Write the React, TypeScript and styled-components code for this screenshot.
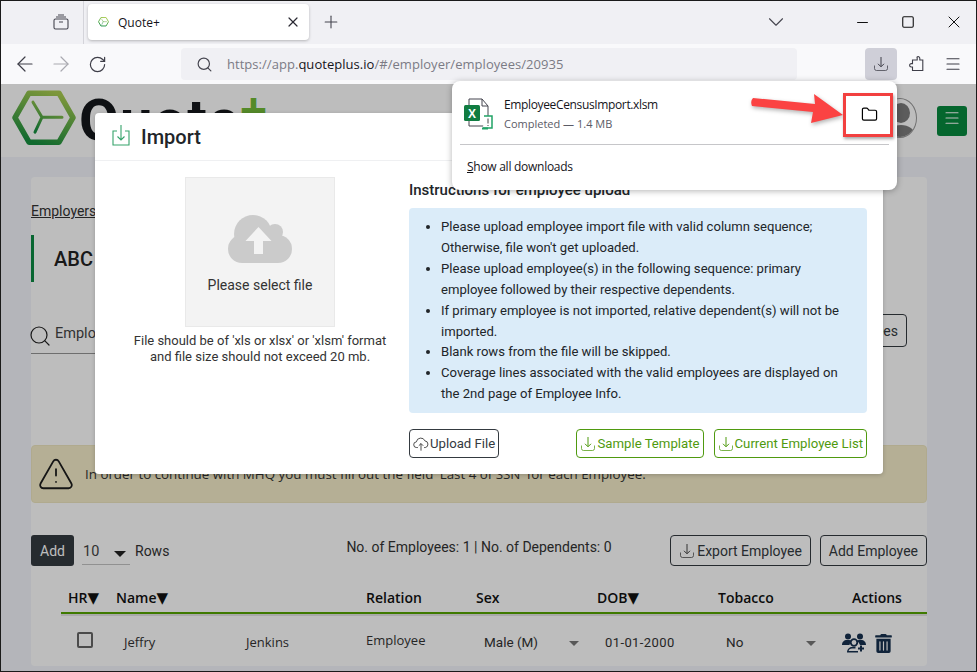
import styled, { createGlobalStyle } from "styled-components";
import {
  ArrowLeft,
  ArrowRight,
  ChevronDown,
  Folder,
  Menu,
  Minus,
  Plus,
  RotateCw,
  Search,
  Square,
  TriangleAlert,
  X,
} from "lucide-react";
import { FaTrashAlt } from "react-icons/fa";

const Global = createGlobalStyle`
  html, body {
    margin: 0;
    padding: 0;
    background: #fff;
  }
  * {
    box-sizing: border-box;
  }
  svg {
    flex: none;
  }
`;

const TrayIcon = ({ size = 16, color = "currentColor" }: { size?: number; color?: string }) => (
  <svg width={size} height={size} viewBox="0 0 16 16" fill="none" stroke={color} strokeWidth="1">
    <path d="M8 1v9.500M5 7.800l3 3 3-3" />
    <path d="M1.500 9.500v3a2 2 0 0 0 2 2h9a2 2 0 0 0 2-2v-3" opacity="0.75" />
  </svg>
);

const PuzzleIcon = () => (
  <svg width="16" height="16" viewBox="0 0 16 16" fill="none" stroke="#3e3e48" strokeWidth="1.100">
    <path d="M8 1.200a1.600 1.600 0 0 1 2.800 1V4h3v10.500H3.500V11H2.300a1.700 1.700 0 0 1 0-3.400h1.200V4h4.700V2.500z" />
  </svg>
);

const CloudOutline = () => (
  <svg width="16" height="16" viewBox="0 0 18 18" fill="none" stroke="#3a3a3a" strokeWidth="1">
    <path d="M5.500 13H4.200a3.200 3.200 0 0 1-.4-6.400A5 5 0 0 1 13.400 5.500a3.800 3.800 0 0 1 .4 7.500h-1.300" />
    <path d="M9 16.500V8.500M6.500 11 9 8.500l2.500 2.500" />
  </svg>
);

const HexLogo = ({ size }: { size: number }) => (
  <svg width={size} height={size * 0.88} viewBox="0 0 64 56" fill="none">
    <defs>
      <linearGradient id="hexGrad" x1="0.7" y1="0" x2="0.3" y2="1">
        <stop offset="0" stopColor="#a9cc50" />
        <stop offset="1" stopColor="#178f40" />
      </linearGradient>
    </defs>
    <path d="M17 3h30l14 24.500-14 24.500H17L3 27.500z" stroke="url(#hexGrad)" strokeWidth="5.500" strokeLinejoin="round" />
    <path d="M21 12 30 27H50M30 27 23 42" stroke="url(#hexGrad)" strokeWidth="3" strokeLinecap="round" strokeLinejoin="round" />
  </svg>
);

const ExcelFileIcon = () => (
  <svg width="32" height="32" viewBox="0 0 32 32" fill="none">
    <path d="M5 1h13l6 7v20H5z" stroke="#45454f" strokeWidth="1" fill="#fff" />
    <path d="M18 1v7h6" stroke="#45454f" strokeWidth="1" />
    <rect x="0" y="7" width="16" height="16" rx="1.500" fill="#107c41" />
    <text x="8" y="19.500" textAnchor="middle" fontFamily="Liberation Sans" fontWeight="700" fontSize="12" fill="#fff">
      X
    </text>
    <path d="M20 18h8v12h-9" stroke="#21a366" strokeWidth="1.500" fill="#fff" />
    <path d="M18 30.500h6" stroke="#21a366" strokeWidth="2" />
    <path d="M24 20.500v5M24 27v1" stroke="#444" strokeWidth="1" />
  </svg>
);

const GroupAddIcon = () => (
  <svg width="24" height="20" viewBox="0 0 24 20" fill="#16304f">
    <circle cx="6" cy="3.500" r="3" />
    <circle cx="18" cy="3.500" r="3" />
    <path d="M0 12c0-3 2-5 5-5h2c1 0 2 .4 2.600 1A6 6 0 0 0 7.500 12z" />
    <path d="M14.500 8c.6-.6 1.600-1 2.500-1H19c3 0 5 2 5 5h-6a6 6 0 0 0-3.500-4z" />
    <circle cx="12" cy="9.500" r="3.300" fill="none" stroke="#16304f" strokeWidth="1.800" />
    <path d="M5 19.500c0-3 2-5.500 5-5.500h3.500v1.500H10c-2 0-3.200 1.300-3.300 2.500H16v1.500z" />
    <path d="M19 12.500v6M16 15.500h6" stroke="#16304f" strokeWidth="2" />
  </svg>
);

const UploadCloud = () => (
  <svg width="64" height="48" viewBox="0 0 64 48">
    <circle cx="25" cy="19" r="19" fill="#cbcbcb" />
    <circle cx="47" cy="17" r="8" fill="#cbcbcb" />
    <rect x="0" y="20" width="64" height="28" rx="14" fill="#cbcbcb" />
    <path d="M30.500 12 43.500 26H35V39H26V26H17.500z" fill="#f3f3f3" />
  </svg>
);

const instructions = [
  "Please upload employee import file with valid column sequence; Otherwise, file won't get uploaded.",
  "Please upload employee(s) in the following sequence: primary employee followed by their respective dependents.",
  "If primary employee is not imported, relative dependent(s) will not be imported.",
  "Blank rows from the file will be skipped.",
  "Coverage lines associated with the valid employees are displayed on the 2nd page of Employee Info.",
];

export default function App() {
  return (
    <>
      <Global />
      <BrowserWindow>
        <TabStrip>
          <TabViewButton>
            <svg width="16" height="16" viewBox="0 0 16 16" fill="none" stroke="#45454f" strokeWidth="1.100">
              <rect x="1" y="5" width="14" height="10" rx="1.500" />
              <path d="M3 3h10M5 1h6M6 8h4" />
            </svg>
          </TabViewButton>
          <Tab>
            <HexLogo size={11} />
            <TabTitle>Quote+</TabTitle>
            <X size={16} color="#2b2a33" absoluteStrokeWidth strokeWidth={1.200} />
          </Tab>
          <NewTab>
            <Plus size={20} color="#45454f" absoluteStrokeWidth strokeWidth={1.100} />
          </NewTab>
          <ListTabs>
            <ChevronDown size={26} color="#45454f" absoluteStrokeWidth strokeWidth={1.100} />
          </ListTabs>
          <WindowControls>
            <Minus size={17} color="#111" absoluteStrokeWidth strokeWidth={1} />
            <Square size={14} color="#111" absoluteStrokeWidth strokeWidth={1.100} />
            <X size={20} color="#111" absoluteStrokeWidth strokeWidth={1} />
          </WindowControls>
        </TabStrip>

        <NavBar>
          <NavButtons>
            <ArrowLeft size={24} color="#3e3e48" absoluteStrokeWidth strokeWidth={1.200} />
            <ArrowRight size={24} color="#a9a9b0" absoluteStrokeWidth strokeWidth={1.200} />
            <RotateCw size={19} color="#3e3e48" absoluteStrokeWidth strokeWidth={1.200} />
          </NavButtons>
          <UrlBar>
            <Search size={17} color="#45454f" absoluteStrokeWidth strokeWidth={1.200} />
            <UrlText>
              https://app.<b>quoteplus.io</b>/#/employer/employees/20935
            </UrlText>
          </UrlBar>
          <DownloadsButton>
            <TrayIcon size={16} color="#3e3e48" />
          </DownloadsButton>
          <ToolButton>
            <PuzzleIcon />
          </ToolButton>
          <ToolButton>
            <Menu size={18} color="#3e3e48" absoluteStrokeWidth strokeWidth={1.100} />
          </ToolButton>
        </NavBar>

        <Page>
          <SiteHeader>
            <HexLogo size={64} />
            <Brand>
              Quote<BrandPlus>+</BrandPlus>
            </Brand>
            <Avatar>
              <AvatarHead />
              <AvatarBody />
            </Avatar>
            <SiteMenu>
              <Menu size={18} color="#fff" absoluteStrokeWidth strokeWidth={1.100} />
            </SiteMenu>
          </SiteHeader>

          <Card>
            <Breadcrumb>
              <u>Employers</u> / ABC
            </Breadcrumb>
            <TitleBar>ABC</TitleBar>
            <SearchRow>
              <SearchField>
                <Search size={24} color="#222" absoluteStrokeWidth strokeWidth={1.200} />
                Employee
              </SearchField>
              <OutlineButton $tall>Import Employees</OutlineButton>
            </SearchRow>
            <Alert>
              <TriangleAlert size={38} color="#1d1d1d" absoluteStrokeWidth strokeWidth={1.800} />
              In order to continue with MHQ you must fill out the field 'Last 4 of SSN' for each Employee.
            </Alert>
            <Toolbar>
              <RowsControl>
                <AddButton>Add</AddButton>
                <RowsSelect>
                  10
                  <Caret />
                </RowsSelect>
                Rows
              </RowsControl>
              <Counts>No. of Employees: 1 | No. of Dependents: 0</Counts>
              <ToolbarActions>
                <OutlineButton>
                  <TrayIcon size={16} color="#444" />
                  Export Employee
                </OutlineButton>
                <OutlineButton>Add Employee</OutlineButton>
              </ToolbarActions>
            </Toolbar>
            <TableHead>
              <HeadCell $pad={7}>
                HR<SortMark>▼</SortMark>
              </HeadCell>
              <HeadCell $span={2}>
                Name<SortMark>▼</SortMark>
              </HeadCell>
              <HeadCell>Relation</HeadCell>
              <HeadCell>Sex</HeadCell>
              <HeadCell>
                DOB<SortMark>▼</SortMark>
              </HeadCell>
              <HeadCell>Tobacco</HeadCell>
              <HeadCell>Actions</HeadCell>
            </TableHead>
            <TableRow>
              <RowCell $pad={16} $lift>
                <CheckBox />
              </RowCell>
              <RowCell $pad={8}>Jeffry</RowCell>
              <RowCell $pad={8}>Jenkins</RowCell>
              <RowCell $lift>Employee</RowCell>
              <SelectCell $right={18}>
                Male (M)
                <Caret $muted />
              </SelectCell>
              <RowCell $pad={8} $roboto>
                01-01-2000
              </RowCell>
              <SelectCell $right={36}>
                No
                <Caret $muted />
              </SelectCell>
              <ActionCell>
                <GroupAddIcon />
                <FaTrashAlt size={19} color="#16304f" />
              </ActionCell>
            </TableRow>
          </Card>

          <Backdrop>
            <Modal>
              <ModalHeader>
                <svg width="20" height="24" viewBox="0 0 20 24" fill="none" stroke="#35a36b" strokeWidth="1.100">
                  <path d="M6 6H2v14h16V6h-4" />
                  <path d="M10 0v15M6.500 11.500 10 15l3.500-3.500" />
                </svg>
                Import
              </ModalHeader>
              <ModalBody>
                <UploadColumn>
                  <DropZone>
                    <UploadCloud />
                    Please select file
                  </DropZone>
                  <UploadHint>
                    File should be of 'xls or xlsx' or 'xlsm' format
                    <br />
                    and file size should not exceed 20 mb.
                  </UploadHint>
                </UploadColumn>
                <InfoColumn>
                  <InfoTitle>Instructions for employee upload</InfoTitle>
                  <InfoBox>
                    {instructions.map((line) => (
                      <li key={line}>{line}</li>
                    ))}
                  </InfoBox>
                  <ModalActions>
                    <ModalButton>
                      <CloudOutline />
                      Upload File
                    </ModalButton>
                    <ModalButton $green>
                      <TrayIcon size={16} color="#4f9a0f" />
                      Sample Template
                    </ModalButton>
                    <ModalButton $green>
                      <TrayIcon size={16} color="#4f9a0f" />
                      Current Employee List
                    </ModalButton>
                  </ModalActions>
                </InfoColumn>
              </ModalBody>
            </Modal>
          </Backdrop>
        </Page>

        <DownloadsPanel>
          <DownloadItem>
            <ExcelFileIcon />
            <DownloadText>
              <FileName>EmployeeCensusImport.xlsm</FileName>
              <FileStatus>Completed — 1.4 MB</FileStatus>
            </DownloadText>
            <Folder size={17} color="#000" absoluteStrokeWidth strokeWidth={1.200} />
          </DownloadItem>
          <ShowAll>
            <u>S</u>how all downloads
          </ShowAll>
        </DownloadsPanel>

        <Callout>
          <svg width="92" height="32" viewBox="0 0 92 32">
            <path d="M2 5 64 11 63 1 92 22 60 30 62 19 1 13Q-1 8 2 5z" fill="#fb4343" />
          </svg>
        </Callout>
        <CalloutBox />
      </BrowserWindow>
    </>
  );
}

const BrowserWindow = styled.div`
  position: relative;
  width: 977px;
  height: 672px;
  overflow: hidden;
  display: flex;
  flex-direction: column;
  font-family: "Roboto", sans-serif;
  background: #f3f5fb;

  &::after {
    content: "";
    position: absolute;
    inset: 0;
    border: 1px solid #1a1a1a;
    pointer-events: none;
    z-index: 60;
  }
`;

const TabStrip = styled.div`
  height: 44px;
  flex: none;
  display: flex;
  align-items: center;
  background: #f0f0f4;
  font-family: "Open Sans", sans-serif;
`;

const TabViewButton = styled.div`
  width: 84px;
  height: 44px;
  padding-left: 53px;
  display: flex;
  align-items: center;
  border-right: 1px solid #d4d4da;
`;

const Tab = styled.div`
  width: 221px;
  height: 36px;
  margin-left: 4px;
  padding: 0 8px 0 10px;
  display: flex;
  align-items: center;
  background: #fff;
  border-radius: 4px;
  box-shadow: 0 1px 3px rgba(0, 0, 0, 0.25);
`;

const TabTitle = styled.span`
  flex: 1;
  margin-left: 9px;
  font-size: 12px;
  color: #15141a;
`;

const NewTab = styled.div`
  width: 16px;
  margin-left: 14px;
  display: flex;
  justify-content: center;
`;

const ListTabs = styled.div`
  width: 16px;
  margin-left: 429px;
  display: flex;
  justify-content: center;
`;

const WindowControls = styled.div`
  margin-left: 55px;
  display: grid;
  grid-template-columns: repeat(3, 46px);
  justify-items: center;
  align-items: center;
`;

const NavBar = styled.div`
  height: 40px;
  flex: none;
  display: flex;
  align-items: center;
  background: #f9f9fb;
`;

const NavButtons = styled.div`
  width: 181px;
  padding-left: 7px;
  display: grid;
  grid-template-columns: repeat(3, 36px);
  justify-items: center;
  align-items: center;
`;

const UrlBar = styled.div`
  width: 616px;
  height: 32px;
  padding-left: 15px;
  display: flex;
  align-items: center;
  gap: 14px;
  background: #f0f0f4;
  border-radius: 4px;
`;

const UrlText = styled.span`
  font-family: "Open Sans", sans-serif;
  font-size: 13px;
  letter-spacing: 0.04px;
  color: #7b7b85;

  b {
    font-weight: 400;
    color: #15141a;
  }
`;

const DownloadsButton = styled.div`
  width: 32px;
  height: 32px;
  margin: 0 2px 0 68px;
  display: flex;
  align-items: center;
  justify-content: center;
  background: #cfcfd8;
  border-radius: 4px;
`;

const ToolButton = styled.div`
  width: 36px;
  height: 32px;
  display: flex;
  align-items: center;
  justify-content: center;
`;

const Page = styled.div`
  position: relative;
  flex: 1;
  overflow: hidden;
`;

const SiteHeader = styled.div`
  height: 73px;
  padding: 6px 10px 0 12px;
  display: flex;
  align-items: flex-start;
  background: #fff;
`;

const Brand = styled.div`
  margin-left: 3px;
  font-size: 58px;
  line-height: 60px;
  font-weight: 700;
  letter-spacing: 1px;
  white-space: nowrap;
  color: #15181c;
`;

const BrandPlus = styled.span`
  display: inline-block;
  font-size: 48px;
  line-height: 40px;
  font-weight: 500;
  vertical-align: 13px;
  color: #72bb38;
`;

const Avatar = styled.div`
  position: relative;
  width: 34px;
  height: 40px;
  margin: 8px 20px 0 auto;
  overflow: hidden;
  border-radius: 50%;
  border: 1px solid #9a9a9a;
`;

const AvatarHead = styled.div`
  position: absolute;
  top: 4px;
  left: 8px;
  width: 18px;
  height: 20px;
  border-radius: 50%;
  background: #7d7d7d;
`;

const AvatarBody = styled.div`
  position: absolute;
  top: 26px;
  left: 3px;
  width: 28px;
  height: 20px;
  border-radius: 50%;
  background: #7d7d7d;
`;

const SiteMenu = styled.div`
  width: 30px;
  height: 30px;
  margin-top: 16px;
  padding-top: 3px;
  display: flex;
  align-items: flex-start;
  justify-content: center;
  background: #078a3f;
  border-radius: 3px;
`;

const Card = styled.div`
  width: 896px;
  margin: 20px 0 0 31px;
  padding: 26px 20px 0 0;
  background: #fff;
  border-radius: 4px;
`;

const Breadcrumb = styled.div`
  font-size: 14px;
  line-height: 17px;
  color: #333;
`;

const TitleBar = styled.div`
  height: 47px;
  margin-top: 15px;
  padding-left: 20px;
  display: flex;
  align-items: center;
  border-left: 3px solid #0b8a43;
  font-size: 20px;
  font-weight: 500;
  color: #222;
`;

const SearchRow = styled.div`
  margin-top: 32px;
  display: flex;
  justify-content: space-between;
  align-items: flex-start;
`;

const SearchField = styled.div`
  width: 400px;
  height: 40px;
  display: flex;
  align-items: center;
  gap: 3px;
  border-bottom: 1px solid #959595;
  font-size: 14.500px;
  color: #444;

  svg {
    margin: 5px 0 0 -3px;
  }
`;

const OutlineButton = styled.div<{ $tall?: boolean }>`
  height: ${({ $tall }) => ($tall ? 33 : 31)}px;
  padding: 0 8px;
  display: flex;
  align-items: center;
  gap: 2px;
  border: 1px solid #343a40;
  border-radius: 4px;
  font-size: 14px;
  color: #343a40;
  white-space: nowrap;
`;

const Alert = styled.div`
  height: 58px;
  width: 896px;
  margin-top: 91px;
  padding-left: 5px;
  display: flex;
  align-items: center;
  gap: 10px;
  background: #f4edca;
  border: 1px solid #eee6c0;
  border-radius: 4px;
  font-family: "Open Sans", sans-serif;
  font-size: 13.350px;
  color: #333;
`;

const Toolbar = styled.div`
  width: 896px;
  margin-top: 32px;
  display: grid;
  grid-template-columns: 1fr auto 1fr;
`;

const RowsControl = styled.div`
  display: flex;
  align-items: center;
  font-size: 14px;
  color: #333;
`;

const AddButton = styled.div`
  width: 43px;
  height: 31px;
  display: flex;
  align-items: center;
  justify-content: center;
  background: #343a40;
  border-radius: 3px;
  color: #fff;
`;

const RowsSelect = styled.div`
  width: 48px;
  height: 29px;
  margin: 0 5px 0 8px;
  padding: 7px 0 0 1px;
  display: flex;
  justify-content: space-between;
  border-bottom: 1px solid #c4c4c4;
  font-size: 14.500px;
  color: #444;
`;

const Caret = styled.span<{ $muted?: boolean }>`
  width: 0;
  height: 0;
  margin: 8px 4px 0 0;
  border-left: 6px solid transparent;
  border-right: 6px solid transparent;
  border-top: 6px solid ${({ $muted }) => ($muted ? "#777" : "#222")};
`;

const Counts = styled.div`
  padding-top: 4px;
  font-size: 14px;
  color: #333;
`;

const ToolbarActions = styled.div`
  display: flex;
  justify-content: flex-end;
  gap: 9px;
`;

const tableColumns = "55px 122px 128px 110px 121px 121px 134px 75px";

const TableHead = styled.div`
  width: 866px;
  height: 29px;
  margin: 19px 0 0 30px;
  padding-bottom: 5px;
  display: grid;
  grid-template-columns: ${tableColumns};
  align-items: end;
  border-bottom: 2px solid #55a500;
  font-family: "Open Sans", sans-serif;
  box-shadow: 0 2px 0 #e4e4e4;
`;

const HeadCell = styled.div<{ $pad?: number; $span?: number }>`
  grid-column: span ${({ $span }) => $span ?? 1};
  padding-left: ${({ $pad }) => $pad ?? 0}px;
  font-size: 14px;
  line-height: 19px;
  font-weight: 600;
  white-space: nowrap;
  color: #111;
`;

const SortMark = styled.span`
  font-family: "DejaVu Sans", sans-serif;
  font-size: 15px;
  line-height: 14px;
`;

const TableRow = styled.div`
  width: 866px;
  height: 52px;
  margin-left: 30px;
  padding-top: 4px;
  display: grid;
  grid-template-columns: ${tableColumns};
  align-items: center;
  font-family: "Open Sans", sans-serif;
  font-size: 13px;
  color: #333;
`;

const RowCell = styled.div<{ $pad?: number; $roboto?: boolean; $lift?: boolean }>`
  margin-top: ${({ $lift }) => ($lift ? -4 : 0)}px;
  padding-left: ${({ $pad }) => $pad ?? 0}px;
  font-family: ${({ $roboto }) => ($roboto ? '"Roboto", sans-serif' : "inherit")};
  letter-spacing: ${({ $roboto }) => ($roboto ? "0.4px" : "0")};
`;

const SelectCell = styled.div<{ $right: number }>`
  padding: 0 ${({ $right }) => $right}px 0 8px;
  display: flex;
  align-items: center;
  justify-content: space-between;
  font-family: "Roboto", sans-serif;
  font-size: 13.500px;

  ${Caret} {
    margin: 2px 0 0 0;
    border-left-width: 5px;
    border-right-width: 5px;
    border-top-width: 5px;
  }
`;

const ActionCell = styled.div`
  margin: 2px 0 0 -10px;
  display: flex;
  align-items: center;
  gap: 8px;
`;

const CheckBox = styled.div`
  width: 16px;
  height: 16px;
  border: 2px solid #666;
  border-radius: 2px;
`;

const Backdrop = styled.div`
  position: absolute;
  inset: 0;
  padding: 29px 0 0 95px;
  background: rgba(0, 0, 0, 0.26);
`;

const Modal = styled.div`
  width: 788px;
  height: 361px;
  background: #fff;
  border-radius: 4px;
  box-shadow: 0 1px 4px rgba(0, 0, 0, 0.2);
`;

const ModalHeader = styled.div`
  height: 48px;
  padding-left: 16px;
  display: flex;
  align-items: center;
  gap: 10px;
  border-bottom: 1px solid #eff0f2;
  font-size: 20px;
  font-weight: 500;
  color: #212529;
`;

const ModalBody = styled.div`
  display: flex;
  padding: 16px 16px 0 0;
`;

const UploadColumn = styled.div`
  width: 314px;
  padding-left: 16px;
  display: flex;
  flex-direction: column;
  align-items: center;
`;

const DropZone = styled.div`
  width: 150px;
  height: 150px;
  padding-top: 37px;
  display: flex;
  flex-direction: column;
  align-items: center;
  gap: 14px;
  background: #f3f3f3;
  border: 1px solid #e9e9e9;
  font-size: 14px;
  color: #333;
`;

const UploadHint = styled.div`
  margin-top: 6px;
  font-size: 13px;
  line-height: 16px;
  text-align: center;
  white-space: nowrap;
  color: #333;
`;

const InfoColumn = styled.div`
  width: 458px;
`;

const InfoTitle = styled.div`
  margin-top: 1px;
  font-size: 15px;
  font-weight: 500;
  line-height: 24px;
  color: #212529;
`;

const InfoBox = styled.ul`
  height: 205px;
  margin: 6px 0 0;
  padding: 9px 12px 0 32px;
  background: #dbecf9;
  border-radius: 4px;
  font-size: 13.100px;
  line-height: 20.900px;
  color: #212529;
`;

const ModalActions = styled.div`
  margin-top: 16px;
  display: flex;
  gap: 10px;

  & > :first-child {
    margin-right: auto;
  }
`;

const ModalButton = styled.div<{ $green?: boolean }>`
  height: 29px;
  padding: 0 3px;
  display: flex;
  align-items: center;
  gap: 1px;
  border: 1px solid ${({ $green }) => ($green ? "#4f9a0f" : "#343a40")};
  border-radius: 4px;
  font-size: 13.200px;
  color: ${({ $green }) => ($green ? "#4f9a0f" : "#343a40")};
  white-space: nowrap;
`;

const DownloadsPanel = styled.div`
  position: absolute;
  top: 81px;
  left: 452px;
  width: 445px;
  height: 109px;
  padding: 0 8px;
  background: #fff;
  border-radius: 8px;
  box-shadow: 0 1px 6px rgba(0, 0, 0, 0.3);
  font-family: "Open Sans", sans-serif;
  z-index: 20;
`;

const DownloadItem = styled.div`
  height: 64px;
  padding: 3px 11px 0 4px;
  display: flex;
  align-items: center;
  border-bottom: 1px solid #c6c6c9;
`;

const DownloadText = styled.div`
  flex: 1;
  margin-left: 8px;
`;

const FileName = styled.div`
  margin-top: -1px;
  font-size: 12px;
  line-height: 17px;
  letter-spacing: -0.36px;
  color: #15141a;
`;

const FileStatus = styled.div`
  margin-top: 3px;
  font-size: 11px;
  line-height: 16px;
  color: #5b5b66;
`;

const ShowAll = styled.div`
  padding: 13px 0 0 7px;
  font-size: 12px;
  line-height: 17px;
  letter-spacing: -0.27px;
  color: #15141a;
`;

const Callout = styled.div`
  position: absolute;
  top: 93px;
  left: 751px;
  display: flex;
  filter: drop-shadow(1px 2px 2px rgba(0, 0, 0, 0.3));
  z-index: 30;
`;

const CalloutBox = styled.div`
  position: absolute;
  top: 93px;
  left: 843px;
  width: 50px;
  height: 44px;
  border: 3px solid #f2403f;
  box-shadow: 1px 2px 3px rgba(0, 0, 0, 0.35);
  z-index: 30;
`;
